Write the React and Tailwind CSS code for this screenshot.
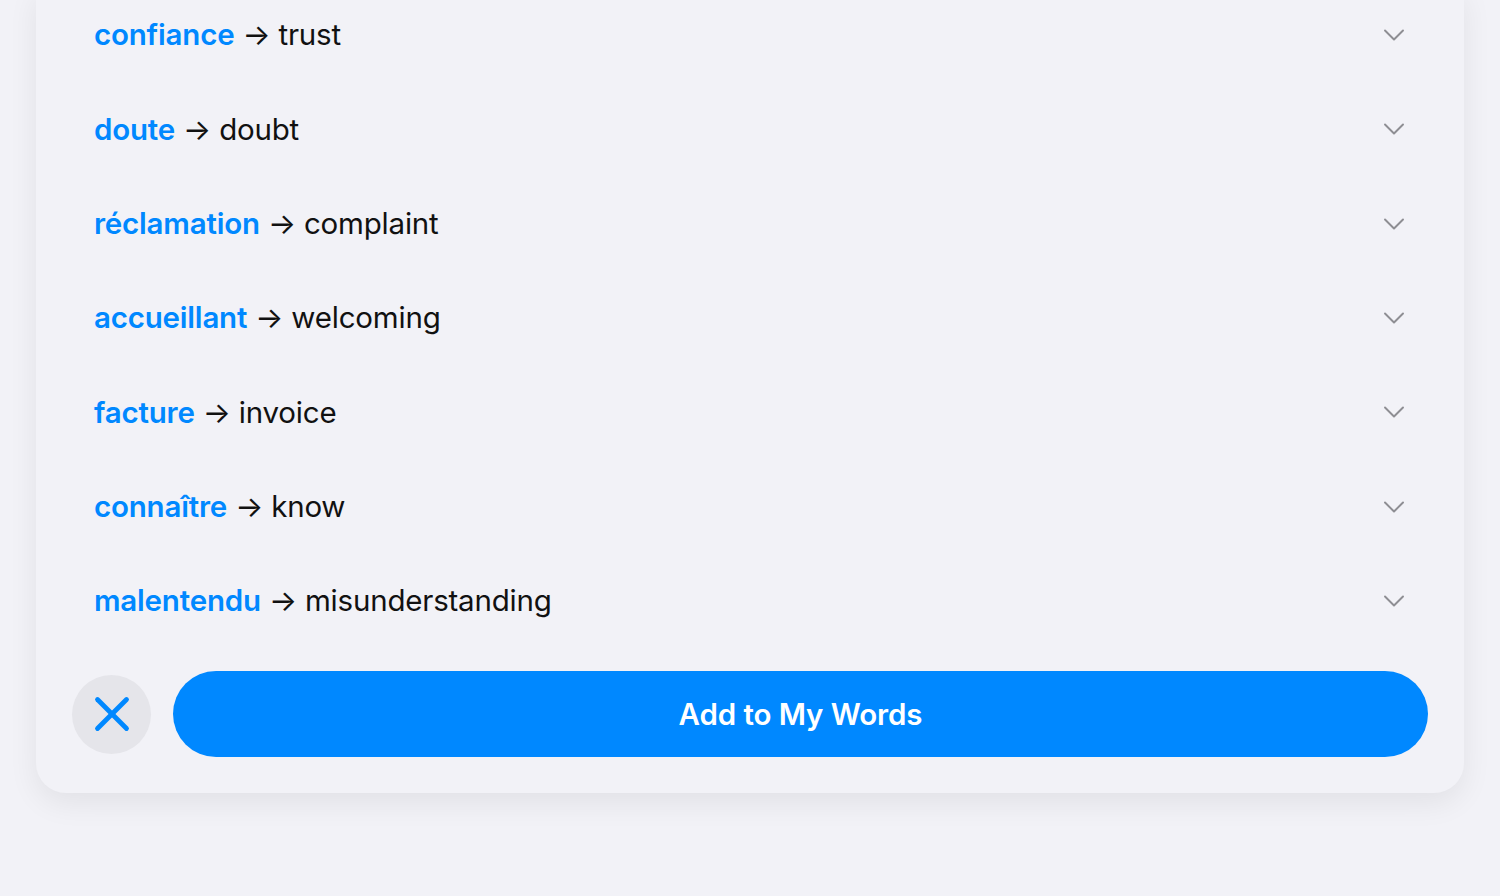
import { ChevronDown, X } from 'lucide-react';

const words = [
  { fr: 'confiance', en: 'trust' },
  { fr: 'doute', en: 'doubt' },
  { fr: 'réclamation', en: 'complaint' },
  { fr: 'accueillant', en: 'welcoming' },
  { fr: 'facture', en: 'invoice' },
  { fr: 'connaître', en: 'know' },
  { fr: 'malentendu', en: 'misunderstanding' },
];

const WordRow = ({ word }) => (
  <div className="flex items-center justify-between h-[94.3px] pl-[58px] pr-[52px]">
    <div className="text-[29.5px] leading-none tracking-[-0.2px]">
      <span className="font-semibold text-[#0088ff]">{word.fr}</span>
      <span className="text-[#111]"> → {word.en}</span>
    </div>
    <ChevronDown className="w-[36px] h-[36px] text-[#8e8e93]" strokeWidth={1.3} />
  </div>
);

export default function App() {
  return (
    <div
      className="h-[896px] overflow-hidden bg-[#f2f2f7]"
      style={{ fontFamily: 'Inter, "Noto Sans", sans-serif' }}
    >
      <div className="mx-[36px] -mt-[12px] bg-[#f2f2f7] rounded-b-[30px] shadow-[0_10px_30px_rgba(0,0,0,0.07)] pb-[36px]">
        {words.map((w) => (
          <WordRow key={w.fr} word={w} />
        ))}
        <div className="flex items-center gap-[22px] px-[36px] mt-[23px]">
          <button className="w-[79px] h-[79px] shrink-0 rounded-full bg-[#e5e5ea] flex items-center justify-center">
            <X className="w-[58px] h-[58px] text-[#0088ff]" strokeWidth={2} />
          </button>
          <button className="flex-1 h-[86px] rounded-full bg-[#0088ff] text-white text-[29.5px] font-semibold tracking-[-0.1px]">
            Add to My Words
          </button>
        </div>
      </div>
    </div>
  );
}
